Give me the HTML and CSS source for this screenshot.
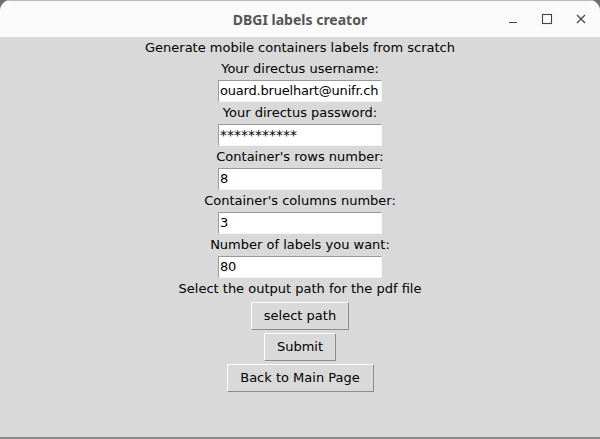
FILE: index.html
```html
<!DOCTYPE html>
<html>
<head>
<meta charset="utf-8">
<link rel="stylesheet" href="styles.css">
</head>
<body>
<div class="window">
  <div class="titlebar">
    <div class="title">DBGI labels creator</div>
    <div class="controls">
      <svg class="ctl" width="14" height="14" viewBox="0 0 14 14"><path d="M3 10.5h8" stroke="#444" stroke-width="1.2"/></svg>
      <svg class="ctl" width="14" height="14" viewBox="0 0 14 14"><rect x="2.5" y="2.5" width="9" height="9" fill="none" stroke="#444" stroke-width="1.1"/></svg>
      <svg class="ctl" width="14" height="14" viewBox="0 0 14 14"><path d="M3 3l8 8M11 3l-8 8" stroke="#444" stroke-width="1.2"/></svg>
    </div>
  </div>
  <div class="content">
    <div class="label first">Generate mobile containers labels from scratch</div>
    <div class="label">Your directus username:</div>
    <div class="entry">ouard.bruelhart@unifr.ch</div>
    <div class="label">Your directus password:</div>
    <div class="entry secret">***********</div>
    <div class="label">Container's rows number:</div>
    <div class="entry">8</div>
    <div class="label">Container's columns number:</div>
    <div class="entry">3</div>
    <div class="label">Number of labels you want:</div>
    <div class="entry">80</div>
    <div class="label">Select the output path for the pdf file</div>
    <div class="button btn-path">select path</div>
    <div class="button btn-submit">Submit</div>
    <div class="button btn-back">Back to Main Page</div>
  </div>
</div>
</body>
</html>
```
FILE: styles.css
```css
html, body {
  margin: 0;
  padding: 0;
  background: #6e6e6e;
}
.window {
  width: 600px;
  height: 439px;
  box-sizing: border-box;
  border-radius: 11px 11px 0 0;
  overflow: hidden;
  background: #d9d9d9;
  border-bottom: 2px solid #8a8a8a;
  display: flex;
  flex-direction: column;
  font-family: "DejaVu Sans", sans-serif;
  font-size: 13px;
  color: #000;
}
.titlebar {
  height: 37px;
  flex: none;
  background: #fafafa;
  position: relative;
  display: flex;
  align-items: center;
  justify-content: center;
  box-shadow: inset 0 1px 0 #b8b8b8;
}
.title {
  font-family: "Noto Sans", "DejaVu Sans", sans-serif;
  font-weight: bold;
  font-size: 14px;
  color: #555;
  padding-top: 1px;
}
.controls {
  position: absolute;
  right: 12px;
  top: 12px;
  display: flex;
  gap: 20px;
}
.ctl {
  display: block;
}
.content {
  display: flex;
  flex-direction: column;
  align-items: center;
}
.label {
  height: 22px;
  line-height: 22px;
  white-space: nowrap;
}
.label.first {
  height: 21px;
  line-height: 21px;
}
.entry {
  width: 164px;
  height: 22px;
  box-sizing: border-box;
  background: #fff;
  border-top: 1px solid #9a9a9a;
  border-left: 1px solid #9a9a9a;
  border-right: 1px solid #f4f4f4;
  border-bottom: 1px solid #f4f4f4;
  padding-left: 1px;
  line-height: 20px;
  font-size: 13px;
  letter-spacing: -0.2px;
  overflow: hidden;
  white-space: nowrap;
}
.entry.secret {
  font-size: 14px;
  letter-spacing: 0;
}
.button {
  box-sizing: border-box;
  height: 28px;
  line-height: 26px;
  border: 1px solid;
  border-color: #ffffff #8c8c8c #8c8c8c #ffffff;
  text-align: center;
  white-space: nowrap;
}
.btn-path {
  width: 98px;
  margin-top: 2px;
}
.btn-submit {
  width: 72px;
  margin-top: 3px;
}
.btn-back {
  width: 147px;
  margin-top: 3px;
}
```
